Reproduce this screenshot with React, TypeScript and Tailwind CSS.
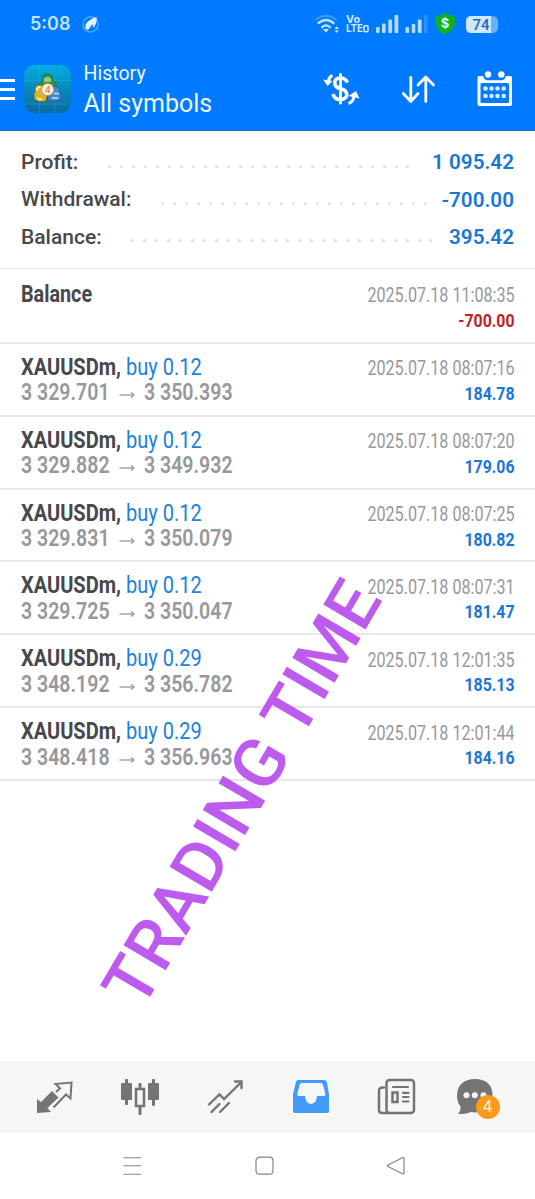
import React from 'react';

const summary = [
  { label: 'Profit:', value: '1 095.42', dots: 26, start: 'w-[87px]' },
  { label: 'Withdrawal:', value: '-700.00', dots: 23, start: 'w-[140px]' },
  { label: 'Balance:', value: '395.42', dots: 26, start: 'w-[110px]' },
];

const deals = [
  { volume: 'buy 0.12', from: '3 329.701', to: '3 350.393', time: '2025.07.18 08:07:16', profit: '184.78' },
  { volume: 'buy 0.12', from: '3 329.882', to: '3 349.932', time: '2025.07.18 08:07:20', profit: '179.06' },
  { volume: 'buy 0.12', from: '3 329.831', to: '3 350.079', time: '2025.07.18 08:07:25', profit: '180.82' },
  { volume: 'buy 0.12', from: '3 329.725', to: '3 350.047', time: '2025.07.18 08:07:31', profit: '181.47' },
  { volume: 'buy 0.29', from: '3 348.192', to: '3 356.782', time: '2025.07.18 12:01:35', profit: '185.13' },
  { volume: 'buy 0.29', from: '3 348.418', to: '3 356.963', time: '2025.07.18 12:01:44', profit: '184.16' },
];

const StatusBar = () => {
  return (
    <div className="flex h-12 items-center pl-[30px] text-[#c4e2ff]">
      <span className="w-[52px] font-['Inter',sans-serif] text-[18px] font-semibold leading-none">5:08</span>
      <svg width="17" height="17" viewBox="0 0 17 17">
        <circle cx="8.5" cy="8.5" r="7.6" fill="none" stroke="#62b0ff" strokeWidth="1.2" />
        <path d="M3.5 8.5 Q7.500 2.500 14.5 1 Q15.500 6.500 11.5 12 L10.500 8 L6.500 13.500 Q3 14 3.500 11 Z" fill="#e2f3ff" />
      </svg>
      <svg className="ml-[216px]" width="183" height="26" viewBox="315 11 183 26">
        <g fill="none" strokeLinecap="round">
          <path d="M316 19.5 Q326 12 336 19.5" stroke="#3d9aff" strokeWidth="1.8" />
          <path d="M318.5 23 Q326 17 333.5 23" stroke="#c4e2ff" strokeWidth="2.3" />
          <path d="M322 27.3 Q326 23.5 330 27.3" stroke="#c4e2ff" strokeWidth="2.2" />
        </g>
        <path d="M323 29 h6 l-3 3.8 z M334.5 29 l2.2 -2.8 l2.2 2.8 z M334.5 30.3 l2.2 2.8 l2.2 -2.8 z" fill="#c4e2ff" />
        <g fill="#d3e9ff" fontFamily="Inter, sans-serif" fontWeight="700">
          <text x="346" y="23" fontSize="10.5" textLength="14" lengthAdjust="spacingAndGlyphs">Vo</text>
          <text x="346" y="32.4" fontSize="10.5" textLength="17" lengthAdjust="spacingAndGlyphs">LTE</text>
        </g>
        <rect x="364" y="25.7" width="4" height="6" rx="1" fill="none" stroke="#d3e9ff" strokeWidth="1.6" />
        <g fill="#b5dbff">
          <rect x="376" y="27" width="3.6" height="6" rx="1" />
          <rect x="382" y="23.5" width="3.6" height="9.5" rx="1" />
          <rect x="388.3" y="19.5" width="3.8" height="13.5" rx="1" />
          <rect x="394.5" y="15" width="3.8" height="18" rx="1" />
          <rect x="405.5" y="27" width="3.6" height="6" rx="1" />
          <rect x="411.7" y="24" width="3.6" height="9" rx="1" />
          <rect x="417.8" y="19.5" width="3.8" height="13.5" rx="1" />
          <rect x="424" y="15" width="3.6" height="18" rx="1" fill="#2f92ff" />
        </g>
        <path d="M445 13 Q449 15.5 454 16 Q455.5 17 455 23 Q454.5 30.5 445 34.5 Q435.5 30.5 435.3 23 Q435 17 436 16 Q441 15.5 445 13 Z" fill="#0fae24" />
        <text x="445" y="28.3" fontSize="13" fontWeight="700" textAnchor="middle" fill="#d9ffe0" fontFamily="Inter, sans-serif">$</text>
        <rect x="466" y="16" width="32" height="17" rx="5.5" fill="#66b2ff" />
        <path d="M471.500 16 H491 V33 H471.500 Q466 33 466 27.500 V21.500 Q466 16 471.500 16 Z" fill="#cfe7ff" />
        <text x="472.500" y="30" fontSize="15.500" fontWeight="500" textLength="17" lengthAdjust="spacingAndGlyphs" fill="#2568b3" fontFamily="Roboto, sans-serif">74</text>
      </svg>
    </div>
  );
};

const AppLogo = () => {
  return (
    <svg className="ml-[9px]" width="47" height="48" viewBox="0 0 47 48">
      <defs>
        <linearGradient id="tile" x1="0" y1="0" x2="0" y2="1">
          <stop offset="0" stopColor="#05aee0" />
          <stop offset="0.6" stopColor="#0882b5" />
          <stop offset="1" stopColor="#0b6b9f" />
        </linearGradient>
      </defs>
      <rect width="47" height="48" rx="11" fill="url(#tile)" />
      <path d="M15.500 0 V48 M31 0 V48 M0 15.500 H47 M0 39 H47" stroke="#39b5dc" strokeWidth="0.6" opacity="0.5" />
      <path d="M15 23 Q14 18 19 15.500 Q18 9 23.500 9 Q29 9 28.500 15.500 Q33 18 33 23 Z" fill="#37913b" stroke="#155f3c" strokeWidth="0.7" />
      <path d="M19.500 14 Q23.500 9.500 27.500 14 L27 17 H20 Z" fill="#8dcb7c" />
      <path d="M10.500 34 Q9 29 11.500 26 Q10 21 14.500 20 Q19 19.500 20 24 Q24 29 22.500 35.500 Q15 38.500 10.500 34 Z" fill="#d5b331" stroke="#6b6a1b" strokeWidth="0.7" />
      <path d="M12.500 26 Q13 22 16.500 22 M13 33 Q15 34.500 18 34" stroke="#fff09a" strokeWidth="1.800" fill="none" />
      <path d="M24 35.500 Q23 29 28 25 Q29 20 33 21.500 Q36.500 23 35 27 Q39 31 36.500 35 Q31 37.500 24 35.500 Z" fill="#4089cb" stroke="#1d5690" strokeWidth="0.7" />
      <path d="M30 28.500 h5 M28 33 h6" stroke="#c1e5fa" strokeWidth="1.500" />
      <circle cx="23.700" cy="24.500" r="6" fill="#faf0df" stroke="#c99069" strokeWidth="0.7" />
      <text x="23.700" y="28" fontSize="9.500" textAnchor="middle" fill="#df6a35" fontFamily="Roboto, sans-serif">4</text>
    </svg>
  );
};

const Header = () => {
  return (
    <header className="h-[131px] border-b border-[#1768bd] bg-[#007aff]">
      <StatusBar />
      <div className="flex h-[82px] items-center text-[#edf7ff]">
        <div className="flex w-[15px] flex-col gap-[6px]">
          <span className="h-[3px] bg-white"></span>
          <span className="h-[3px] bg-white"></span>
          <span className="h-[3px] bg-white"></span>
        </div>
        <AppLogo />
        <div className="ml-[12.600px] w-[237.400px] pb-px">
          <p className="text-[19.500px] leading-[29px]">History</p>
          <p className="text-[25px] leading-[31px]">All symbols</p>
        </div>
        <svg width="40" height="40" viewBox="322 69 40 40" fill="none" stroke="white">
          <path d="M341.500 74.500 V103" strokeWidth="3" strokeLinecap="round" />
          <path d="M348.500 82.500 Q346.500 78 341.500 78 Q335.500 78.200 335.700 83 Q336 87.300 341.500 88.700 Q347.800 90 347.800 94.700 Q347.500 99.300 341.500 99.600 Q335.500 99.500 334 94" strokeWidth="3.600" />
          <path d="M333.500 75.500 Q329.500 77 329.500 82" strokeWidth="3.200" />
          <path d="M324 79.500 L333.500 81 L328.500 86 Z" fill="white" stroke="none" />
          <path d="M349.500 103.500 Q354.500 102 355 96" strokeWidth="3" />
          <path d="M349.500 96 L357 91 L360.500 98.500 Z" fill="white" stroke="none" />
        </svg>
        <svg className="ml-[38px]" width="38" height="32" viewBox="400 73 38 32" fill="none" stroke="white" strokeWidth="2.800" strokeLinecap="round" strokeLinejoin="round">
          <path d="M411.800 77.500 V101 M404.300 93.500 L411.800 101.500 L419 93.500" />
          <path d="M426.800 101.500 V77.500 M419 85 L426.800 77 L434.500 85" />
        </svg>
        <svg className="ml-[38px]" width="40" height="40" viewBox="476 69 40 40">
          <path d="M480 76 H484 Q485.500 80.500 489 80.200 H502 Q505.500 80.500 507 76 H511.500 Q513 76 513 77.500 V104 Q513 106 511 106 H480.500 Q478.500 106 478.500 104 V77.500 Q478.500 76 480 76 Z" fill="white" />
          <rect x="481.500" y="83" width="28.500" height="20" rx="1.500" fill="#007aff" />
          <circle cx="489" cy="74.500" r="3.200" fill="white" />
          <circle cx="502.300" cy="74.500" r="3.200" fill="white" />
          <g fill="#d8ecff">
            {[486.500, 492.500, 498.500, 504.700].map((x) => (
              <React.Fragment key={x}>
                <circle cx={x} cy="88.500" r="2.300" />
                <circle cx={x} cy="96" r="2.300" />
              </React.Fragment>
            ))}
          </g>
        </svg>
      </div>
    </header>
  );
};

const Summary = () => {
  return (
    <section className="h-[138px] border-b border-[#e2e3e4] pt-[13.400px] pr-[21px] pl-[21px]">
      {summary.map((row) => (
        <div key={row.label} className="flex h-[37.200px] items-center text-[21px] font-medium">
          <span className={`${row.start} shrink-0 whitespace-nowrap text-[#47484b]`}>{row.label}</span>
          <div className="mt-[7px] flex shrink-0 gap-[8.940px]">
            {Array.from({ length: row.dots }, (_, i) => (
              <span key={i} className="size-[3px] rounded-full bg-[#dfe0e2]"></span>
            ))}
          </div>
          <span className="ml-auto text-[20.700px] whitespace-nowrap font-semibold text-[#1976d9]">{row.value}</span>
        </div>
      ))}
    </section>
  );
};

const History = () => {
  return (
    <section>
      <div className="flex h-[74.800px] justify-between border-b-2 border-[#e6e7e8] pt-[12px] pr-[20.800px] pl-[21px]">
        <p className="origin-left scale-x-[0.86] pt-px text-[23px] font-bold leading-[26px] text-[#47484b]">Balance</p>
        <div className="pt-px text-right">
          <p className="origin-right scale-x-[0.806] text-[20px] leading-[26px] text-[#97989b]">2025.07.18 11:08:35</p>
          <p className="origin-right scale-x-[0.835] text-[19px] font-bold leading-[26px] text-[#c22128]">-700.00</p>
        </div>
      </div>
      {deals.map((deal) => (
        <div key={deal.time} className="flex h-[72.900px] justify-between border-b-2 border-[#e6e7e8] pt-[11px] pr-[20.800px] pl-[21px] whitespace-nowrap">
          <div className="text-[23px] leading-[26px]">
            <p className="flex">
              <span className="w-[105px]">
                <span className="inline-block origin-left scale-x-[0.87] font-bold text-[#47484b]">XAUUSDm,</span>
              </span>
              <span className="inline-block origin-left scale-x-[0.87] text-[#1c80e0]">{deal.volume}</span>
            </p>
            <p className="-mt-[0.600px] flex font-semibold text-[#97989b]">
              <span className="w-[98px]">
                <span className="inline-block origin-left scale-x-[0.85]">{deal.from}</span>
              </span>
              <svg className="mt-[11px] mr-[9px]" width="16" height="8" viewBox="0 0 16 8" fill="none" stroke="#97989b">
                <path d="M0.500 4 H15" strokeWidth="1.300" />
                <path d="M12 1.500 L15 4 L12 6.500" strokeWidth="1.400" />
              </svg>
              <span className="inline-block origin-left scale-x-[0.85]">{deal.to}</span>
            </p>
          </div>
          <div className="pt-[0.500px] text-right">
            <p className="origin-right scale-x-[0.806] text-[20px] leading-[26px] text-[#97989b]">{deal.time}</p>
            <p className="-mt-[0.500px] origin-right scale-x-[0.835] text-[19px] font-bold leading-[26px] text-[#1976d9]">{deal.profit}</p>
          </div>
        </div>
      ))}
    </section>
  );
};

const BottomTabs = () => {
  return (
    <nav className="flex h-[72px] items-center bg-[#f6f6f6] pb-[3px] pl-[33px] text-[#747474]">
      <svg width="44" height="42" viewBox="33 1075 44 42">
        <path d="M37 1099 L41 1102 L52 1091 L58.500 1097.500 L47.500 1108 L51 1112 L37 1113 Z" fill="currentColor" />
        <path d="M56 1092 L60 1088.500 L55.500 1084 L71.500 1082.500 L70.500 1098.500 L66 1094.500 L53.500 1107.500" fill="none" stroke="currentColor" strokeWidth="2" />
      </svg>
      <svg className="ml-[41px]" width="44" height="42" viewBox="118 1075 44 42">
        <g fill="currentColor">
          <rect x="121" y="1083" width="11" height="17" rx="1" />
          <rect x="125" y="1079" width="3" height="26" rx="1" />
          <rect x="148" y="1083" width="11" height="17" rx="1" />
          <rect x="152" y="1079" width="3" height="27" rx="1" />
          <rect x="138.500" y="1083" width="3" height="6" rx="1" />
          <rect x="138.500" y="1106" width="3" height="9" rx="1" />
        </g>
        <rect x="136" y="1089" width="8" height="17" fill="none" stroke="currentColor" strokeWidth="2.500" />
      </svg>
      <svg className="ml-[41px]" width="44" height="42" viewBox="203 1075 44 42" fill="none" stroke="currentColor" strokeWidth="2.400" strokeLinecap="round">
        <path d="M209 1104.500 L219.500 1094.500 L224 1099 L241 1082.500" />
        <path d="M235 1081.500 H241.500 V1088" />
        <path d="M211.500 1112 L219.500 1104 M220 1112 L229 1103" />
      </svg>
      <svg className="ml-[42px]" width="44" height="42" viewBox="289 1075 44 42">
        <path d="M298 1080 H324 Q326 1080 326.800 1082 L329 1094 V1111 Q329 1113 327 1113 H295 Q293 1113 293 1111 V1094 L296 1082 Q296.500 1080 298 1080 Z" fill="#429bf7" />
        <path d="M301.500 1083 H321 Q322.500 1083 323 1085 L325.500 1094.500 Q325.500 1096 324 1096 H317 Q316.500 1103.500 311 1104 Q305.500 1103.500 305 1096 H299 Q296.800 1096 297.300 1094 L299.500 1085 Q300 1083 301.500 1083 Z" fill="#f6f6f6" />
      </svg>
      <svg className="ml-[42px]" width="44" height="42" viewBox="375 1075 44 42" fill="none" stroke="currentColor" strokeWidth="2.500" strokeLinecap="round">
        <rect x="386.500" y="1080" width="27.500" height="33" rx="3" />
        <path d="M384 1087.500 Q379 1087 379 1091 V1110 Q379 1113 382 1113 H389" />
        <path d="M393 1087 H408 M403 1092.800 H408.500 M403 1097 H408.500 M403 1101.500 H408.500" strokeWidth="2.200" />
        <rect x="392.500" y="1092.500" width="5" height="9.500" />
      </svg>
      <div className="relative ml-[35px]">
        <svg width="46" height="46" viewBox="454 1073 46 46">
          <path d="M475 1079 Q492.500 1079.500 492.500 1095.500 Q492 1112.500 475 1112.500 L471 1112 Q464 1115 458 1113.500 Q461 1111 460.500 1106.500 Q457 1102 457 1095.500 Q457.500 1079.500 475 1079 Z" fill="currentColor" />
          <circle cx="466.500" cy="1095.300" r="3" fill="#f6f6f6" />
          <circle cx="474.800" cy="1095.300" r="3" fill="#f6f6f6" />
          <circle cx="483.500" cy="1095.300" r="3" fill="#f6f6f6" />
        </svg>
        <span className="absolute top-[22px] left-[21.500px] flex size-6 items-center justify-center rounded-full bg-[#fd9a1a] text-[17px] text-[#fff3dc]">
          4
        </span>
      </div>
    </nav>
  );
};

const SystemBar = () => {
  return (
    <div className="flex h-[66px] items-center bg-white pl-[122px]">
      <svg width="20" height="20" viewBox="0 0 20 20" stroke="#858585" strokeWidth="1.100">
        <path d="M1.500 1.700 H19 M1.500 9.700 H19 M1.500 18.200 H19" />
      </svg>
      <svg className="ml-[112px]" width="20" height="20" viewBox="0 0 20 20" fill="none" stroke="#858585" strokeWidth="1.200">
        <rect x="2" y="1.200" width="17" height="17" rx="3.500" />
      </svg>
      <svg className="ml-[112px]" width="20" height="20" viewBox="0 0 20 20" fill="none" stroke="#858585" strokeWidth="1.200">
        <path d="M16.500 1.700 Q18 1 18 2.500 V17 Q18 18.500 16.500 17.700 L2 10.600 Q1 9.800 2 9 Z" />
      </svg>
    </div>
  );
};

const App = () => {
  return (
    <div className="relative flex h-[1199px] w-[535px] flex-col overflow-hidden bg-white font-['Roboto',sans-serif]">
      <Header />
      <main className="flex-1">
        <Summary />
        <History />
      </main>
      <BottomTabs />
      <SystemBar />
      {/* watermark */}
      <div className="absolute top-[1017px] left-[151px] origin-top-left rotate-[-59.600deg]">
        <p className="-mt-[69px] origin-left scale-x-[1.020] text-[69px] font-medium leading-[69px] whitespace-nowrap text-[#bd5bee]">TRADING TIME</p>
      </div>
    </div>
  );
};

export default App;
